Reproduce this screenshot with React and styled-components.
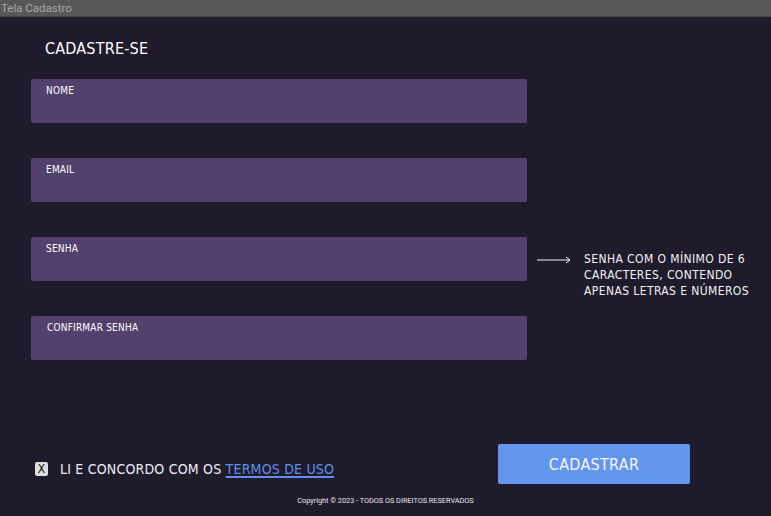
import React from 'react';
import styled, { createGlobalStyle } from 'styled-components';

const Global = createGlobalStyle`
  body {
    margin: 0;
    background: #1f1b2d;
    font-family: "DejaVu Sans Condensed", "DejaVu Sans", sans-serif;
  }
`;

const Page = styled.div`
  width: 771px;
  height: 516px;
  display: flex;
  flex-direction: column;
  background: #1f1b2d;
  overflow: hidden;
`;

const TitleBar = styled.div`
  height: 17px;
  background: #575757;
  color: #a9a9a9;
  font-family: Roboto, "Liberation Sans", sans-serif;
  font-size: 11.5px;
  line-height: 17px;
  padding-left: 1px;
  border-bottom: 1px solid #444;
  box-sizing: border-box;
`;

const Main = styled.div`
  padding: 0 31px;
  display: flex;
  flex-direction: column;
`;

const Heading = styled.h1`
  margin: 0;
  height: 62px;
  display: flex;
  align-items: center;
  padding-left: 14px;
  font-size: 16px;
  font-weight: 400;
  color: #ffffff;
  letter-spacing: 0.2px;
`;

const Form = styled.div`
  display: grid;
  grid-template-columns: 496px auto;
  grid-auto-rows: 44px;
  row-gap: 35px;
`;

const Field = styled.label`
  grid-column: 1;
  height: 44px;
  background: #52416d;
  border-radius: 2px;
  box-sizing: border-box;
  padding: 6px 0 0 ${p => p.$indent || 15}px;
  font-size: 10px;
  color: #ffffff;
  letter-spacing: 0.2px;
  line-height: 12px;
`;

const Hint = styled.div`
  grid-column: 2;
  grid-row: 3;
  display: flex;
  align-items: flex-start;
  padding: 14px 0 0 10px;
  gap: 12px;
`;

const Arrow = styled.svg`
  margin-top: 5px;
  flex: none;
`;

const HintText = styled.p`
  margin: 0;
  font-size: 12px;
  line-height: 16px;
  color: #f2f2f2;
  letter-spacing: 0.4px;
  white-space: nowrap;
`;

const Bottom = styled.div`
  margin-top: 84px;
  display: flex;
  align-items: center;
  justify-content: space-between;
  width: 659px;
  box-sizing: border-box;
  padding-left: 4px;
`;

const Agree = styled.div`
  display: flex;
  align-items: center;
  gap: 12px;
  margin-top: 10px;
  font-size: 14px;
  color: #ececf2;
  letter-spacing: 0.2px;
`;

const Box = styled.span`
  width: 13px;
  height: 14px;
  background: #dcdcdc;
  border-radius: 2px;
  display: flex;
  align-items: center;
  justify-content: center;
  font-size: 12px;
  color: #111;
  line-height: 1;
`;

const TermsLink = styled.a`
  color: #5f8fe8;
  text-decoration: underline;
  text-decoration-thickness: 1.5px;
  text-underline-offset: 2px;
`;

const Button = styled.button`
  width: 192px;
  height: 40px;
  border: none;
  border-radius: 2px;
  background: #6495ec;
  color: #f4f6ff;
  font-family: inherit;
  font-size: 16px;
  letter-spacing: 0.3px;
`;

const Copyright = styled.p`
  margin: 12px 0 0;
  text-align: center;
  font-family: Roboto, "Liberation Sans", sans-serif;
  font-size: 7.3px;
  color: #e8e8e8;
`;

const fields = [
  { label: 'NOME' },
  { label: 'EMAIL' },
  { label: 'SENHA' },
  { label: 'CONFIRMAR SENHA', indent: 16 },
];

export default function App() {
  return (
    <Page>
      <Global />
      <TitleBar>Tela Cadastro</TitleBar>
      <Main>
        <Heading>CADASTRE-SE</Heading>
        <Form>
          {fields.map(f => (
            <Field key={f.label} $indent={f.indent}>{f.label}</Field>
          ))}
          <Hint>
            <Arrow width="35" height="8" viewBox="0 0 35 8">
              <path d="M0 4 H33 M29 1 L33 4 L29 7" stroke="#f2f2f2" strokeWidth="1" fill="none" />
            </Arrow>
            <HintText>
              SENHA COM O MÍNIMO DE 6<br />
              CARACTERES, CONTENDO<br />
              APENAS LETRAS E NÚMEROS
            </HintText>
          </Hint>
        </Form>
        <Bottom>
          <Agree>
            <Box>X</Box>
            <span>LI E CONCORDO COM OS <TermsLink href="#">TERMOS DE USO</TermsLink></span>
          </Agree>
          <Button>CADASTRAR</Button>
        </Bottom>
      </Main>
      <Copyright>Copyright © 2023 - TODOS OS DIREITOS RESERVADOS</Copyright>
    </Page>
  );
}
